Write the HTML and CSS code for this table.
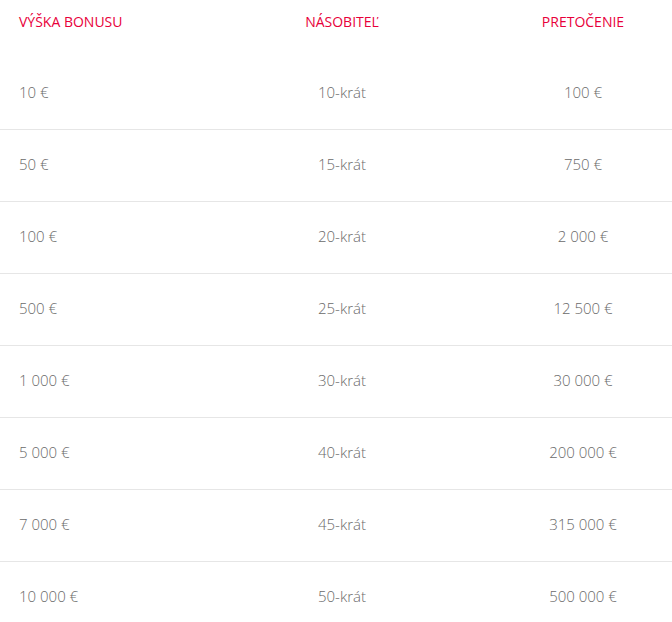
FILE: index.html
```html
<!DOCTYPE html>
<html lang="sk">
<head>
<meta charset="utf-8">
<title>Bonus</title>
<link rel="stylesheet" href="styles.css">
</head>
<body>
<div class="table">
  <div class="row head">
    <div class="cell c1">VÝŠKA BONUSU</div>
    <div class="cell c2">NÁSOBITEĽ</div>
    <div class="cell c3">PRETOČENIE</div>
  </div>
  <div class="row"><div class="cell c1">10 €</div><div class="cell c2">10-krát</div><div class="cell c3">100 €</div></div>
  <div class="row"><div class="cell c1">50 €</div><div class="cell c2">15-krát</div><div class="cell c3">750 €</div></div>
  <div class="row"><div class="cell c1">100 €</div><div class="cell c2">20-krát</div><div class="cell c3">2 000 €</div></div>
  <div class="row"><div class="cell c1">500 €</div><div class="cell c2">25-krát</div><div class="cell c3">12 500 €</div></div>
  <div class="row"><div class="cell c1">1 000 €</div><div class="cell c2">30-krát</div><div class="cell c3">30 000 €</div></div>
  <div class="row"><div class="cell c1">5 000 €</div><div class="cell c2">40-krát</div><div class="cell c3">200 000 €</div></div>
  <div class="row"><div class="cell c1">7 000 €</div><div class="cell c2">45-krát</div><div class="cell c3">315 000 €</div></div>
  <div class="row last"><div class="cell c1">10 000 €</div><div class="cell c2">50-krát</div><div class="cell c3">500 000 €</div></div>
</div>
</body>
</html>
```
FILE: styles.css
```css
html, body {
  margin: 0;
  padding: 0;
  background: #ffffff;
}
body {
  font-family: "Open Sans", "Liberation Sans", sans-serif;
  font-size: 15px;
  line-height: 20px;
  color: #6a6a6a;
  font-weight: 300;
}
.table {
  width: 672px;
}
.row {
  display: grid;
  grid-template-columns: 190px 304px 178px;
  align-items: center;
  height: 67px;
  padding-bottom: 4px;
  border-bottom: 1px solid #e6e6e6;
}
.row.head {
  height: auto;
  padding: 12px 0 26px;
  border-bottom: none;
  color: #e8003a;
  font-size: 14px;
  font-weight: 400;
}
.row.last {
  border-bottom: none;
}
.c1 {
  padding-left: 19px;
}
.c2, .c3 {
  text-align: center;
}
```
